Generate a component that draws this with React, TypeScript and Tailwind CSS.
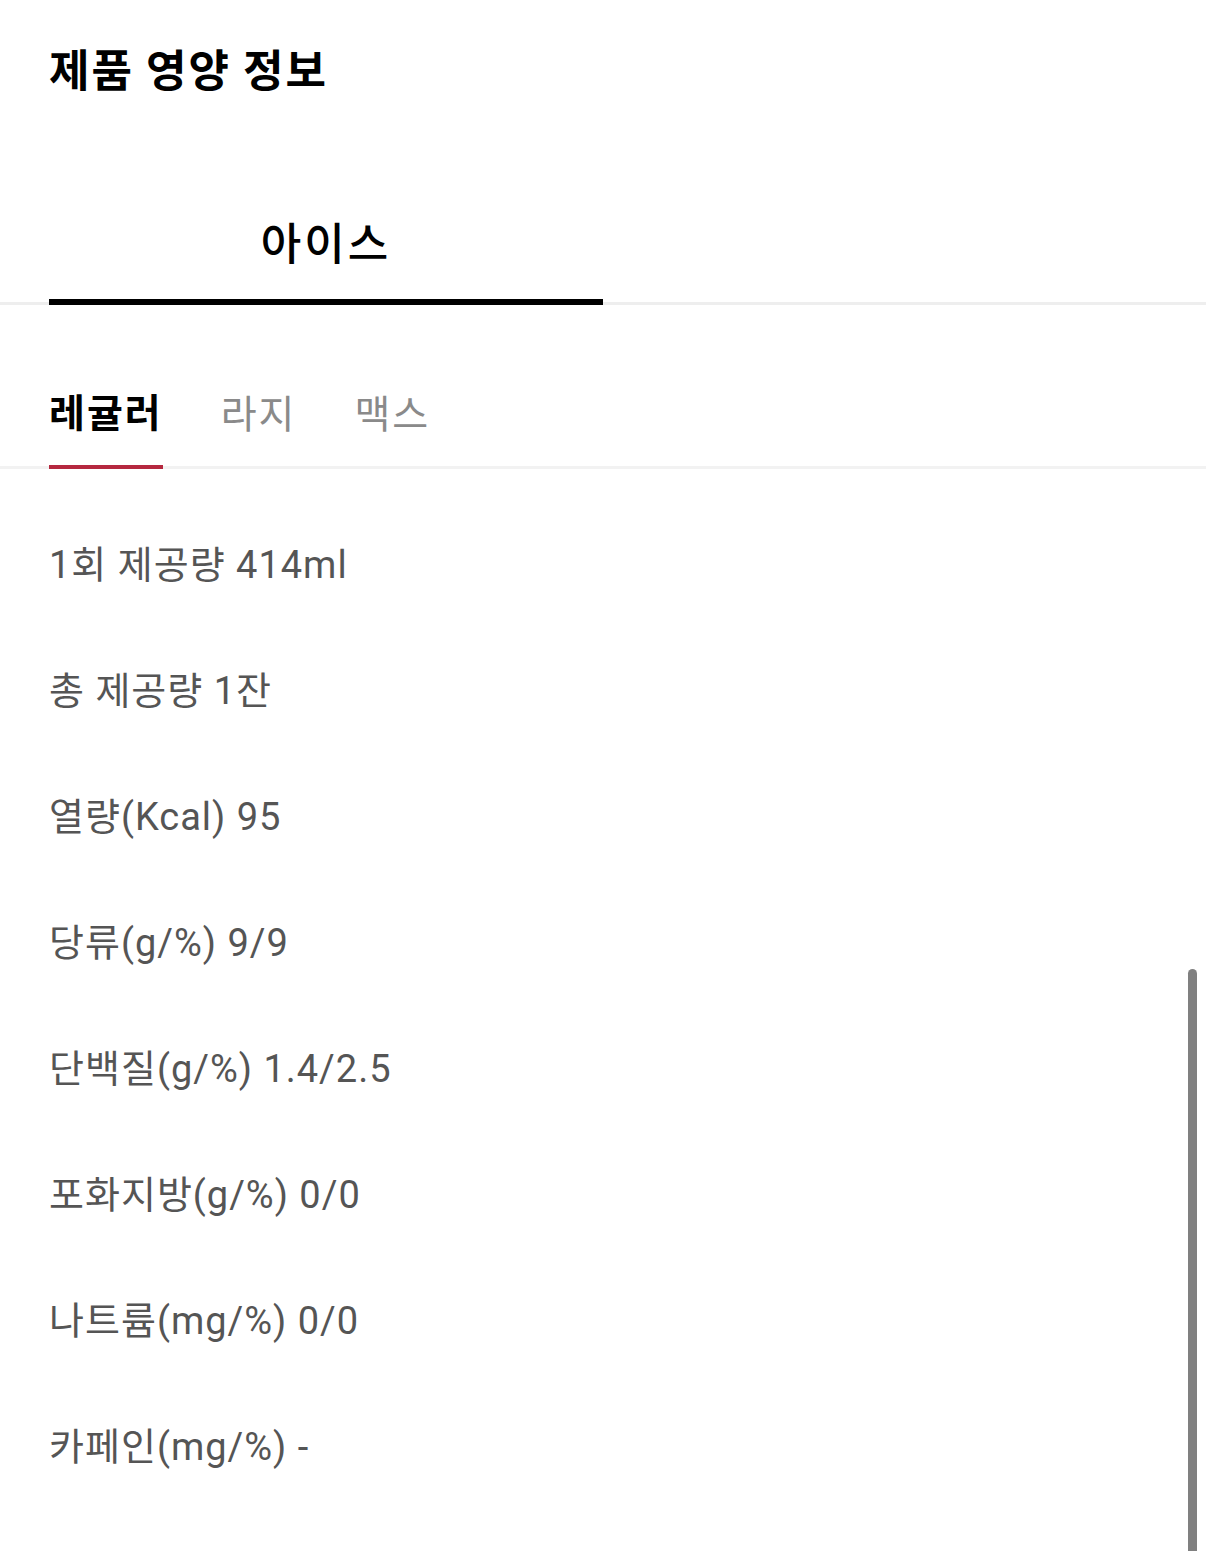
import React from "react";

const font = { fontFamily: '"Noto Sans CJK KR", "Noto Sans", sans-serif' };
const rowFont = { fontFamily: 'Roboto, "Noto Sans CJK KR", sans-serif' };

const rows = [
  "1회 제공량 414ml",
  "총 제공량 1잔",
  "열량(Kcal) 95",
  "당류(g/%) 9/9",
  "단백질(g/%) 1.4/2.5",
  "포화지방(g/%) 0/0",
  "나트륨(mg/%) 0/0",
  "카페인(mg/%) -",
];

export default function App() {
  return (
    <div
      className="relative min-h-[1551px] w-full overflow-hidden bg-white"
      style={font}
    >
      <h1 className="px-[49px] pt-[40px] text-[44px] font-bold leading-[56px] tracking-[2px] text-black">
        제품 영양 정보
      </h1>

      {/* 아이스 탭 */}
      <div className="mt-[115px] border-b-[3px] border-[#eeeeee]">
        <div className="flex px-[49px]">
          <button className="-mb-[3px] w-[554px] border-b-[6px] border-black pb-[28px] text-center text-[44px] font-medium leading-[60px] tracking-[3px] text-black">
            아이스
          </button>
        </div>
      </div>

      {/* 사이즈 탭 */}
      <div className="mt-[77px] border-b-[3px] border-[#f2f2f2]">
        <div className="flex gap-[58px] px-[49px]">
          <button className="-mb-[3px] border-b-[4px] border-[#b5283f] pb-[27px] text-left text-[39px] font-bold leading-[56px] tracking-[2px] text-black">
            레귤러
          </button>
          <button className="pb-[27px] text-[39px] leading-[56px] tracking-[2px] text-[#8a8a8a]">
            라지
          </button>
          <button className="pb-[27px] text-[39px] leading-[56px] tracking-[2px] text-[#8a8a8a]">
            맥스
          </button>
        </div>
      </div>

      <ul className="mt-[33px] px-[49px]" style={rowFont}>
        {rows.map((r) => (
          <li
            key={r}
            className="flex h-[126px] items-center text-[38px] tracking-[1px] text-[#555555]"
          >
            {r}
          </li>
        ))}
      </ul>

      <div className="absolute left-[1188px] top-[969px] h-[620px] w-[9px] rounded-full bg-[#808080]" />
    </div>
  );
}
